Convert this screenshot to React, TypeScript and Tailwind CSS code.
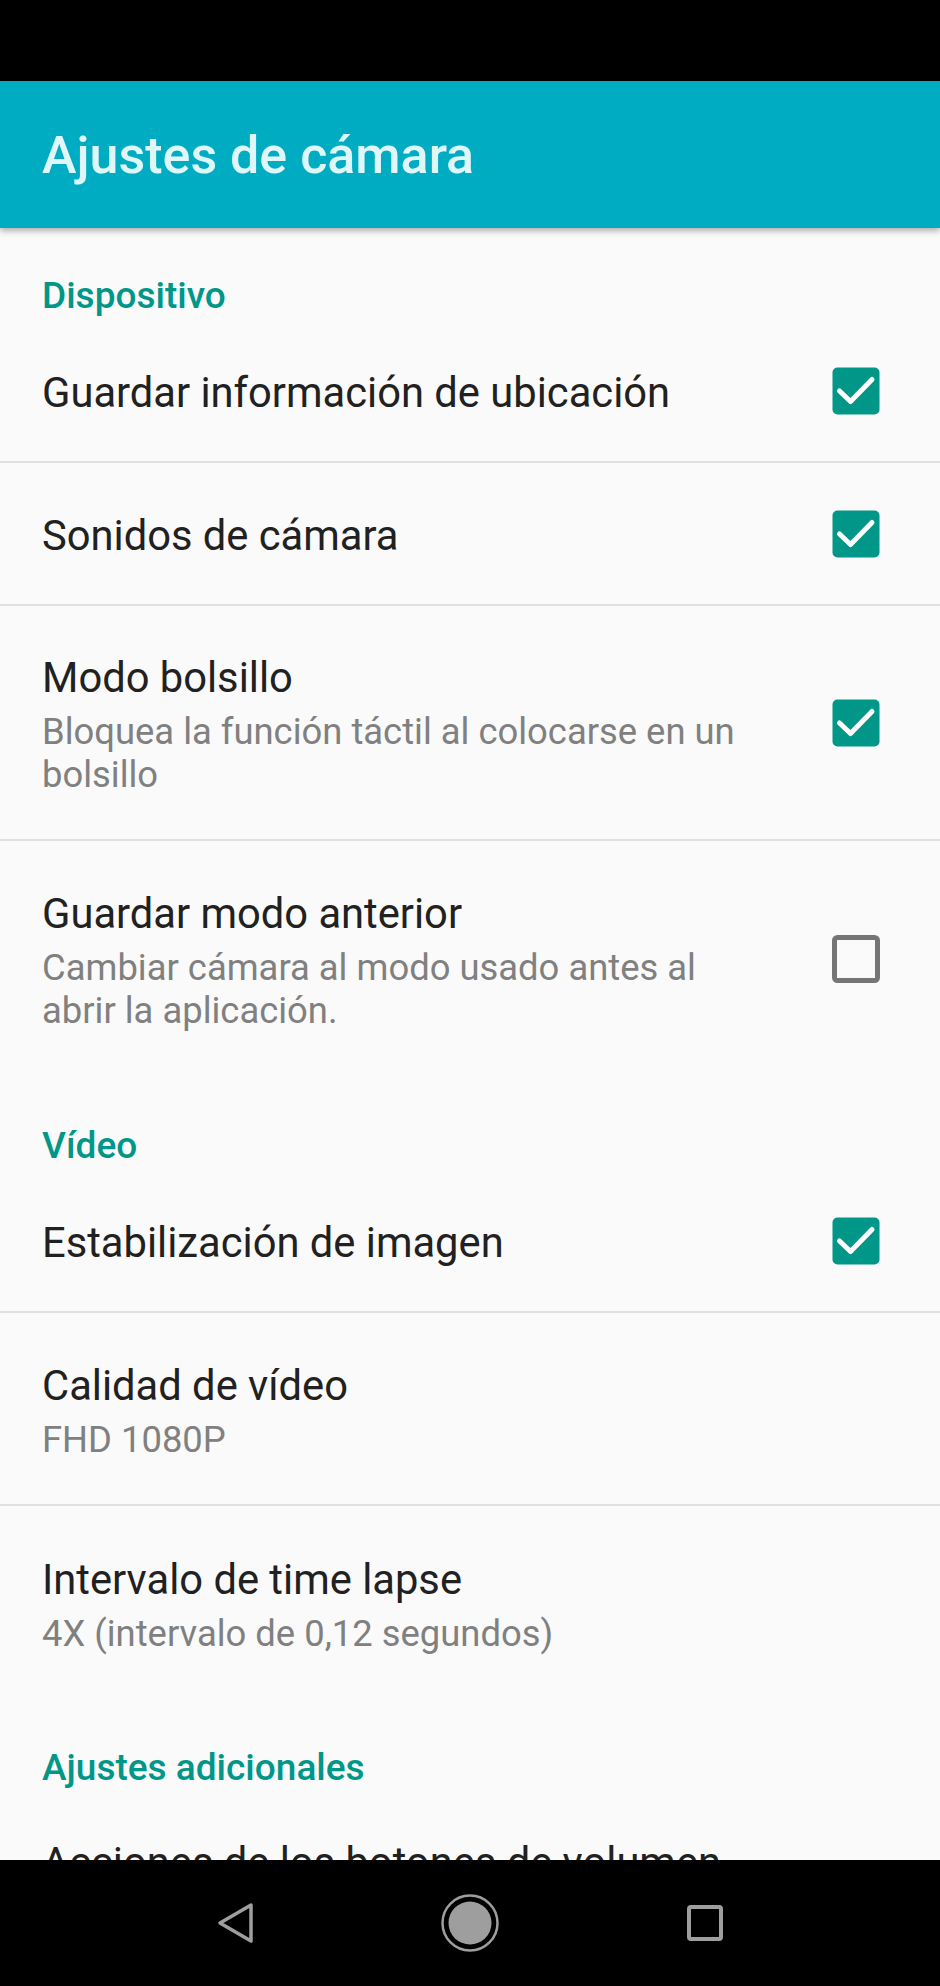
import React from "react";

function Box({ checked }: { checked: boolean }) {
  if (checked) {
    return (
      <svg width="48" height="48" viewBox="0 0 48 48" className="shrink-0">
        <rect x="0.5" y="0.5" width="47" height="47" rx="5" fill="#009688" />
        <path d="M7.5 24 L18.5 34.5 L40 12.5" fill="none" stroke="#fff" strokeWidth="5" strokeLinecap="round" strokeLinejoin="round" />
      </svg>
    );
  }
  return (
    <svg width="48" height="48" viewBox="0 0 48 48" className="shrink-0">
      <rect x="2.5" y="2.5" width="43" height="43" rx="3" fill="none" stroke="#757575" strokeWidth="5" />
    </svg>
  );
}

function Section({ children, className }: { children: string; className: string }) {
  return <div className={"shrink-0 px-[42px] text-[37px] leading-[44px] font-medium text-[#009688] " + className}>{children}</div>;
}

function Row({ title, sub, check, className, divider = true }: { title: string; sub?: string[]; check?: boolean; className: string; divider?: boolean }) {
  return (
    <div className={"shrink-0 flex items-center justify-between pl-[42px] pr-[60px] " + (divider ? "border-b-2 border-[#e0e0e0] " : "") + className}>
      <div className={"flex flex-col " + (sub ? "pt-[3px]" : "pt-[5px]")}>
        <div className="text-[41.7px] leading-[52px] text-[#212121]">{title}</div>
        {sub && (
          <div className="mt-[6px]">
            {sub.map((s) => (
              <div key={s} className="text-[36.4px] leading-[43px] text-[#808080]">{s}</div>
            ))}
          </div>
        )}
      </div>
      {check !== undefined && <Box checked={check} />}
    </div>
  );
}

export default function App() {
  return (
    <div className="w-[940px] h-[1986px] flex flex-col bg-black overflow-hidden font-['Roboto',sans-serif]">
      <div className="h-[81px] shrink-0 bg-black" />
      <div className="h-[147px] shrink-0 bg-[#00acc1] flex items-center px-[42px] pt-[3px] text-[52px] font-medium text-[#e0f7fa] shadow-[0_3px_6px_rgba(0,0,0,0.3)] z-10 relative">
        Ajustes de cámara
      </div>
      <div className="h-[1632px] shrink-0 bg-[#fafafa] overflow-hidden flex flex-col">
        <Section className="mt-[46px]">Dispositivo</Section>
        <Row className="h-[145px] pt-[2px]" title="Guardar información de ubicación" check={true} />
        <Row className="h-[143px]" title="Sonidos de cámara" check={true} />
        <Row className="h-[235px]" title="Modo bolsillo" sub={["Bloquea la función táctil al colocarse en un", "bolsillo"]} check={true} />
        <Row className="h-[235px]" divider={false} title="Guardar modo anterior" sub={["Cambiar cámara al modo usado antes al", "abrir la aplicación."]} check={false} />
        <Section className="mt-[48px]">Vídeo</Section>
        <Row className="h-[145px] pt-[2px]" title="Estabilización de imagen" check={true} />
        <Row className="h-[193px]" title="Calidad de vídeo" sub={["FHD 1080P"]} />
        <Row className="h-[193px]" divider={false} title="Intervalo de time lapse" sub={["4X (intervalo de 0,12 segundos)"]} />
        <Section className="mt-[47px]">Ajustes adicionales</Section>
        <div className="shrink-0 mt-[47px] px-[42px] text-[41.7px] leading-[52px] text-[#212121] whitespace-nowrap">Acciones de los botones de volumen</div>
      </div>
      <div className="flex-1 bg-black flex items-center justify-center gap-[188px]">
        <svg width="36" height="44" viewBox="0 0 36 44">
          <path d="M34 4 L3 22 L34 40 Z" fill="none" stroke="#9e9e9e" strokeWidth="3.5" strokeLinejoin="round" />
        </svg>
        <svg width="58" height="58" viewBox="0 0 58 58">
          <circle cx="29" cy="29" r="27.5" fill="none" stroke="#9e9e9e" strokeWidth="2.5" />
          <circle cx="29" cy="29" r="21.5" fill="#9e9e9e" />
        </svg>
        <svg width="36" height="36" viewBox="0 0 36 36">
          <rect x="2" y="2" width="32" height="32" rx="2" fill="none" stroke="#9e9e9e" strokeWidth="4" />
        </svg>
      </div>
    </div>
  );
}
